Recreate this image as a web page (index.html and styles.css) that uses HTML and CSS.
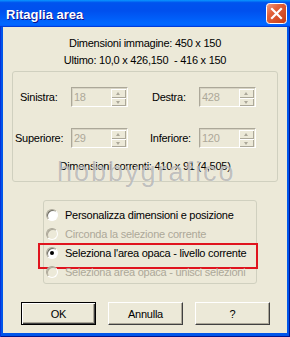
FILE: index.html
```html
<!DOCTYPE html>
<html lang="it">
<head>
<meta charset="utf-8">
<title>Ritaglia area</title>
<link rel="stylesheet" href="styles.css">
</head>
<body>
<div class="window">
  <header class="titlebar">
    <span class="title">Ritaglia area</span>
    <span class="close" aria-label="Chiudi">
      <svg width="21" height="21" viewBox="0 0 21 21">
        <defs>
          <linearGradient id="cg" x1="0" y1="0" x2="1" y2="1">
            <stop offset="0" stop-color="#F0A08A"/>
            <stop offset="0.35" stop-color="#E2623B"/>
            <stop offset="1" stop-color="#C63A14"/>
          </linearGradient>
        </defs>
        <rect x="0.5" y="0.5" width="20" height="20" rx="3" fill="url(#cg)" stroke="#FFFFFF"/>
        <path d="M6 6 L15 15 M15 6 L6 15" stroke="#FFFFFF" stroke-width="2.2" stroke-linecap="square"/>
      </svg>
    </span>
  </header>
  <main class="body">
    <p class="info">Dimensioni immagine: 450 x 150</p>
    <p class="info">Ultimo: 10,0 x 426,150&nbsp; - 416 x 150</p>

    <section class="group dims">
      <div class="dims-grid">
        <span class="lbl lbl-sin">Sinistra:</span>
        <div class="spin"><span class="spin-val">18</span><span class="spin-btns"><span class="spin-btn up"></span><span class="spin-btn down"></span></span></div>
        <span class="lbl lbl-des">Destra:</span>
        <div class="spin"><span class="spin-val">428</span><span class="spin-btns"><span class="spin-btn up"></span><span class="spin-btn down"></span></span></div>
        <span class="lbl lbl-sup">Superiore:</span>
        <div class="spin"><span class="spin-val">29</span><span class="spin-btns"><span class="spin-btn up"></span><span class="spin-btn down"></span></span></div>
        <span class="lbl lbl-inf">Inferiore:</span>
        <div class="spin"><span class="spin-val">120</span><span class="spin-btns"><span class="spin-btn up"></span><span class="spin-btn down"></span></span></div>
      </div>
      <p class="current">Dimensioni correnti: 410 x 91 (4,505)</p>
      <span class="watermark">hobbygrafico</span>
    </section>

    <section class="group modes">
      <div class="radio-row"><span class="radio"></span><span>Personalizza dimensioni e posizione</span></div>
      <div class="radio-row disabled"><span class="radio"></span><span>Circonda la selezione corrente</span></div>
      <div class="radio-row highlighted"><span class="radio checked"></span><span>Seleziona l'area opaca - livello corrente</span></div>
      <div class="radio-row disabled"><span class="radio"></span><span>Seleziona area opaca - unisci selezioni</span></div>
    </section>

    <div class="buttons">
      <button class="btn btn-default">OK</button>
      <button class="btn">Annulla</button>
      <button class="btn">?</button>
    </div>
  </main>
</div>
</body>
</html>
```

FILE: styles.css
```css
* { box-sizing: border-box; }

html, body {
  margin: 0;
  padding: 0;
}

body {
  width: 290px;
  height: 337px;
  overflow: hidden;
  font-family: Tahoma, "Liberation Sans", Arial, sans-serif;
  font-size: 11px;
  letter-spacing: -0.25px;
  color: #000;
}

.window {
  width: 290px;
  height: 337px;
  display: flex;
  flex-direction: column;
  background: #0055EA;
  box-shadow: inset 1px 0 #0831D9, inset -1px -1px #00138C;
}

.titlebar {
  height: 27px;
  flex: none;
  display: flex;
  align-items: center;
  justify-content: space-between;
  padding: 0 3px 0 6px;
  background: linear-gradient(180deg, #0997FF 0%, #0053EE 10%, #0050EE 40%, #0066FF 85%, #0066FF 92%, #005BFF 95%, #003DD7 97%, #003DD7 100%);
}

.title {
  color: #fff;
  font-family: "Liberation Sans", Arial, sans-serif;
  font-weight: bold;
  font-size: 13px;
  letter-spacing: 0;
  padding-top: 2px;
  text-shadow: 1px 1px #0F1089;
}

.close {
  display: block;
  width: 21px;
  height: 21px;
}

.close svg { display: block; }

.body {
  flex: 1;
  margin: 0 3px 4px;
  padding: 9px 9px 8px;
  background: #ECE9D8;
}

.info {
  margin: 0;
  text-align: center;
  line-height: 14px;
}

.info + .info { margin-top: 3px; }

.group {
  position: relative;
  border: 1px solid #D0D0BF;
  border-radius: 3px;
}

.dims {
  margin-top: 4px;
  padding: 15px 0 8px;
}

.dims-grid {
  display: grid;
  grid-template-columns: 58px 57px 71px 57px;
  grid-auto-rows: 20px;
  row-gap: 21px;
  align-items: center;
}

.lbl { line-height: 14px; white-space: nowrap; }
.lbl-sin { padding-left: 7px; }
.lbl-des { padding-left: 24px; }
.lbl-sup { padding-left: 2px; }
.lbl-inf { padding-left: 22px; }

.spin {
  height: 20px;
  display: flex;
  border: 1px solid;
  border-color: #ACA899 #FFFFFF #FFFFFF #ACA899;
  box-shadow: inset 1px 1px #D8D4C4;
  background: #ECE9D8;
}

.spin-val {
  flex: 1;
  padding: 2px 0 0 2px;
  line-height: 14px;
  color: #ACA899;
}

.spin-btns {
  width: 15px;
  margin: 1px 1px 0 0;
  display: flex;
  flex-direction: column;
}

.spin-btn {
  flex: 1;
  position: relative;
  background: #ECE9D8;
  box-shadow: inset 1px 1px #FFFFFF, inset -1px -1px #ACA899;
}

.spin-btn::before {
  content: "";
  position: absolute;
  left: 5px;
  width: 0;
  height: 0;
  border-left: 2.5px solid transparent;
  border-right: 2.5px solid transparent;
}

.spin-btn.up::before {
  top: 3px;
  border-bottom: 3px solid #ACA899;
}

.spin-btn.down::before {
  top: 3px;
  border-top: 3px solid #ACA899;
}

.current {
  margin: 11px 0 0;
  text-align: center;
  line-height: 14px;
}

.watermark {
  position: absolute;
  left: 44px;
  top: 87px;
  font-family: "Liberation Sans", Arial, sans-serif;
  font-size: 27px;
  line-height: 27px;
  letter-spacing: 2px;
  color: rgba(120, 120, 120, 0.45);
  text-shadow: 0 0 1px rgba(255, 255, 255, 0.8);
  pointer-events: none;
  white-space: nowrap;
}

.modes {
  margin: 18px 21px 0 31px;
  padding: 4px 0 2px 2px;
}

.radio-row {
  position: relative;
  height: 19px;
  display: flex;
  align-items: center;
  gap: 7px;
  white-space: nowrap;
}

.radio-row.disabled { color: #ACA899; }

.radio {
  flex: none;
  width: 12px;
  height: 12px;
  border-radius: 50%;
  border: 1px solid;
  border-color: #ACA899 #FFFFFF #FFFFFF #ACA899;
  box-shadow: inset 1px 1px #716F64;
  background: #FFFFFF;
  position: relative;
}

.radio-row.disabled .radio {
  background: #ECE9D8;
  box-shadow: inset 1px 1px #ACA899;
}

.radio.checked::after {
  content: "";
  position: absolute;
  left: 3px;
  top: 3px;
  width: 4px;
  height: 4px;
  border-radius: 50%;
  background: #000;
}

.radio-row.highlighted::after {
  content: "";
  position: absolute;
  left: -8px;
  right: -2px;
  top: 0;
  height: 22px;
  border: 2px solid #E0141E;
}

.buttons {
  margin-top: 18px;
  padding-left: 9px;
  display: flex;
  gap: 12px;
}

.btn {
  width: 75px;
  height: 23px;
  padding: 0;
  font-family: Tahoma, "Liberation Sans", Arial, sans-serif;
  font-size: 11px;
  letter-spacing: -0.25px;
  color: #000;
  background: #ECE9D8;
  border: 1px solid;
  border-color: #FFFFFF #404040 #404040 #FFFFFF;
  box-shadow: inset -1px -1px #ACA899;
}

.btn-default {
  border: 1px solid #000;
  box-shadow: inset 1px 1px #FFFFFF, inset -1px -1px #404040, inset -2px -2px #ACA899;
}
```
